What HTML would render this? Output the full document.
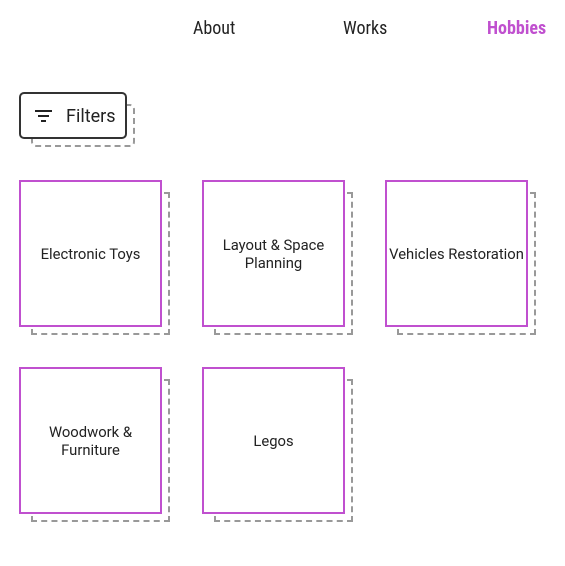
<!DOCTYPE html>
<html><head><style>
body{margin:0;width:565px;height:566px;background:#fff;position:relative;overflow:hidden;font-family:"Roboto","Liberation Sans",sans-serif}
.nav{position:absolute;top:18px;font-family:"Roboto Condensed","Liberation Sans Narrow","Liberation Sans",sans-serif;font-size:18px;color:#222}
.d{position:absolute;border:2px dashed #999;box-sizing:border-box}
.c{position:absolute;width:143px;height:147px;border:2px solid #c050cf;box-sizing:border-box;background:#fff;display:flex;align-items:center;justify-content:center;text-align:center;font-size:14.8px;color:#222;line-height:18px}
</style></head><body>
<div class="nav" style="left:193px">About</div>
<div class="nav" style="left:343px">Works</div>
<div class="nav" style="left:487px;color:#c050cf;font-weight:bold">Hobbies</div>

<div class="d" style="left:31px;top:104px;width:104px;height:43px;border-radius:5px"></div>
<div style="position:absolute;left:19px;top:92px;width:108px;height:47px;border:2px solid #333;border-radius:5px;box-sizing:border-box;background:#fff;font-size:18px;color:#222">
<svg style="position:absolute;left:14px;top:15px" width="18" height="14"><rect x="0" y="1" width="17" height="2" fill="#222"/><rect x="3" y="6" width="11" height="2" fill="#222"/><rect x="6" y="11" width="5" height="2" fill="#222"/></svg>
<span style="position:absolute;left:45px;top:12px">Filters</span></div>

<div class="d" style="left:31px;top:192px;width:139px;height:143px"></div>
<div class="c" style="left:19px;top:180px">Electronic Toys</div>
<div class="d" style="left:214px;top:192px;width:139px;height:143px"></div>
<div class="c" style="left:202px;top:180px">Layout &amp; Space<br>Planning</div>
<div class="d" style="left:397px;top:192px;width:139px;height:143px"></div>
<div class="c" style="left:385px;top:180px;font-size:14.8px;white-space:nowrap">Vehicles Restoration</div>
<div class="d" style="left:31px;top:379px;width:139px;height:143px"></div>
<div class="c" style="left:19px;top:367px">Woodwork &amp;<br>Furniture</div>
<div class="d" style="left:214px;top:379px;width:139px;height:143px"></div>
<div class="c" style="left:202px;top:367px">Legos</div>
</body></html>
